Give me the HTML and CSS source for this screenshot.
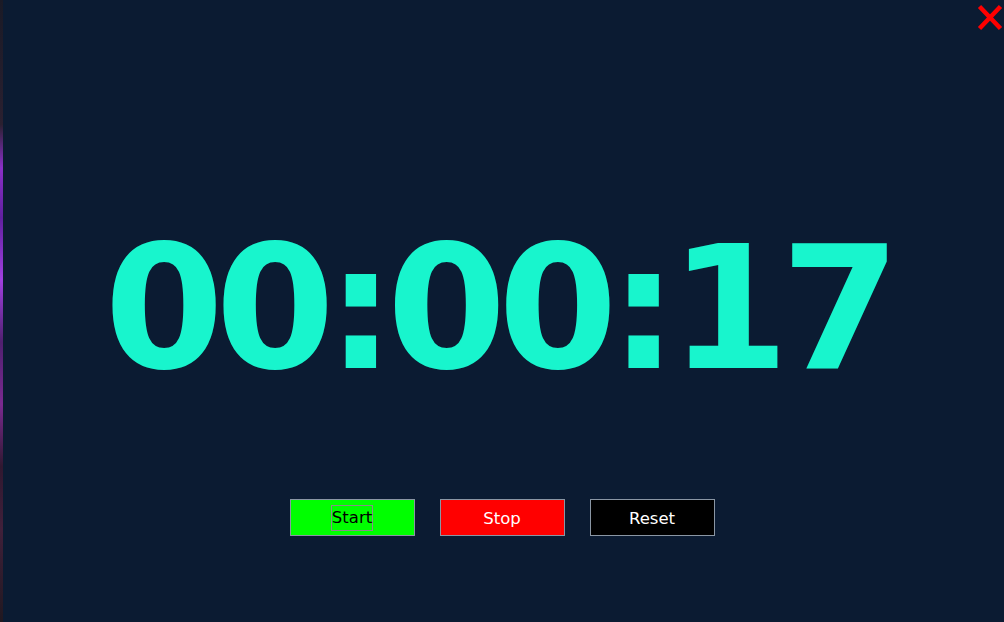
FILE: index.html
```html
<!DOCTYPE html>
<html>
<head>
<meta charset="utf-8">
<link rel="stylesheet" href="styles.css">
</head>
<body>
<div class="app">
  <div class="edge-left"></div>
  <button class="close" aria-label="Close">
    <svg width="26" height="27" viewBox="0 0 26 27"><path d="M2.5 2.5 L23.5 24.5 M23.5 2.5 L2.5 24.5" stroke="#ff0000" stroke-width="4.5" stroke-linecap="butt" fill="none"/></svg>
  </button>
  <main class="main">
    <div class="timer">00:00:17</div>
    <div class="controls">
      <button class="btn btn-start"><span class="focus">Start</span></button>
      <button class="btn btn-stop">Stop</button>
      <button class="btn btn-reset">Reset</button>
    </div>
  </main>
</div>
</body>
</html>
```
FILE: styles.css
```css
html, body {
  margin: 0;
  padding: 0;
  width: 1004px;
  height: 622px;
  overflow: hidden;
}
body {
  background: #0b1b32;
  font-family: "DejaVu Sans", sans-serif;
}
.app {
  position: relative;
  width: 1004px;
  height: 622px;
  background: #0b1b32;
}
.edge-left {
  position: absolute;
  left: 0;
  top: 0;
  width: 3px;
  height: 622px;
  background: linear-gradient(to bottom, #1a1a26 0%, #2a2030 20%, #8a30c8 27%, #6020a0 35%, #a040e0 45%, #502070 55%, #7a2a90 65%, #301830 75%, #40203a 85%, #201820 100%);
}
.close {
  position: absolute;
  top: 4px;
  right: 1px;
  padding: 0;
  margin: 0;
  border: 0;
  background: none;
  width: 26px;
  height: 27px;
  display: block;
}
.close svg { display: block; }
.main {
  display: flex;
  flex-direction: column;
  align-items: center;
  padding-top: 209px;
}
.timer {
  font-family: "DejaVu Sans", sans-serif;
  font-weight: bold;
  font-size: 172px;
  line-height: 200px;
  letter-spacing: -8.5px;
  color: #18f5cd;
  white-space: nowrap;
  padding-right: 8px;
}
.controls {
  display: flex;
  gap: 25px;
  margin-top: 90px;
}
.btn {
  width: 125px;
  height: 37px;
  border: 1px solid #8a96a4;
  font-family: "DejaVu Sans", sans-serif;
  font-size: 16.5px;
  padding: 1px 0 0 0;
  margin: 0;
  display: flex;
  align-items: center;
  justify-content: center;
}
.btn-start { background: #00ff00; color: #000; }
.btn-stop { background: #ff0000; color: #fff; }
.btn-reset { background: #000; color: #fff; }
.focus {
  border: 1px solid #8a8a8a;
  padding: 2px 0 3px 0;
  line-height: 19px;
}
```
